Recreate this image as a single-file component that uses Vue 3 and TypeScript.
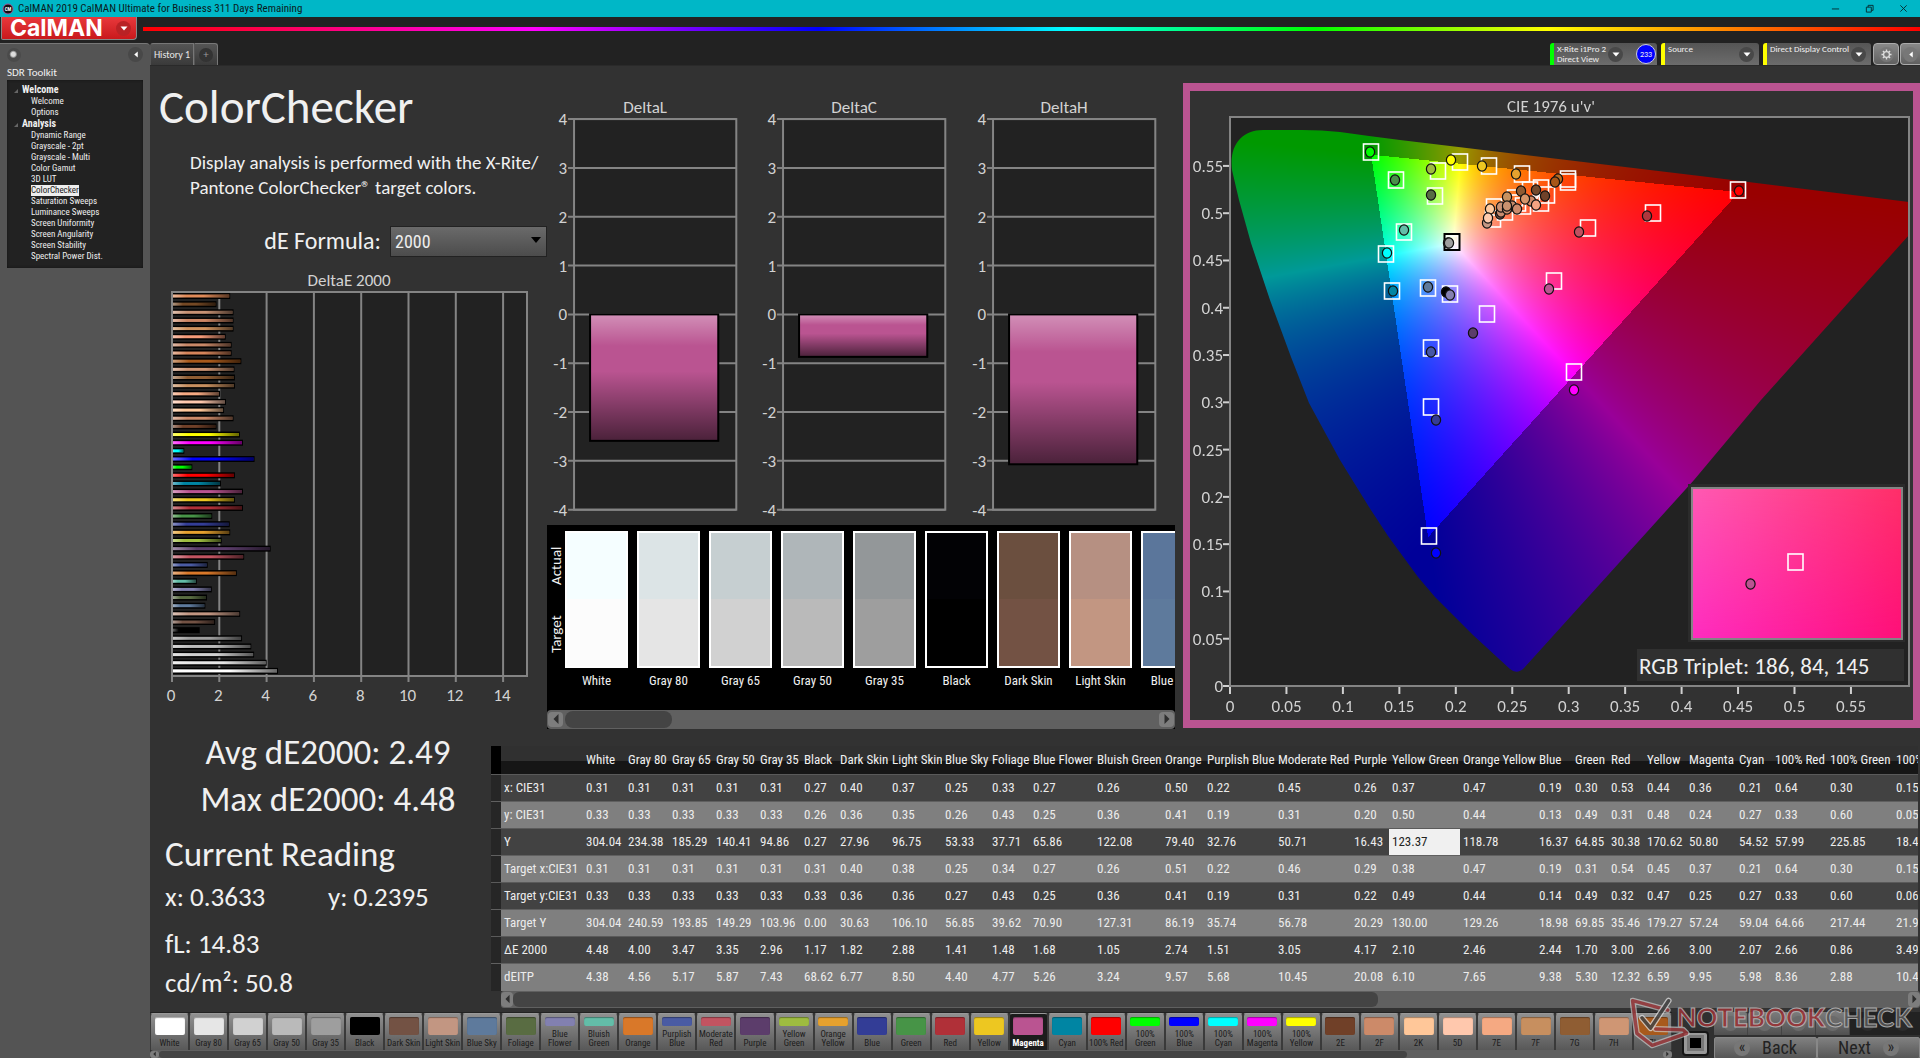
<script setup lang="ts">
import { onMounted, ref } from 'vue'

interface Patch { name: string; color: string; de: number }

const patches: Patch[] = [
  { name: 'White', color: '#ffffff', de: 4.48 },
  { name: 'Gray 80', color: '#e6e6e6', de: 4.0 },
  { name: 'Gray 65', color: '#d1d1d1', de: 3.47 },
  { name: 'Gray 50', color: '#bababa', de: 3.35 },
  { name: 'Gray 35', color: '#9e9e9e', de: 2.96 },
  { name: 'Black', color: '#000000', de: 1.17 },
  { name: 'Dark Skin', color: '#735244', de: 1.82 },
  { name: 'Light Skin', color: '#c29682', de: 2.88 },
  { name: 'Blue Sky', color: '#5e7a9c', de: 1.41 },
  { name: 'Foliage', color: '#596c42', de: 1.48 },
  { name: 'Blue Flower', color: '#8280b0', de: 1.68 },
  { name: 'Bluish Green', color: '#63bda8', de: 1.05 },
  { name: 'Orange', color: '#d97829', de: 2.74 },
  { name: 'Purplish Blue', color: '#4a5ba3', de: 1.51 },
  { name: 'Moderate Red', color: '#c25461', de: 3.05 },
  { name: 'Purple', color: '#5c3d6b', de: 4.17 },
  { name: 'Yellow Green', color: '#9ebc40', de: 2.1 },
  { name: 'Orange Yellow', color: '#e6a12e', de: 2.46 },
  { name: 'Blue', color: '#333d96', de: 2.44 },
  { name: 'Green', color: '#479447', de: 1.7 },
  { name: 'Red', color: '#b03038', de: 3.0 },
  { name: 'Yellow', color: '#edc721', de: 2.66 },
  { name: 'Magenta', color: '#ba5491', de: 3.0 },
  { name: 'Cyan', color: '#0085a3', de: 2.07 },
  { name: '100% Red', color: '#ff0000', de: 2.66 },
  { name: '100% Green', color: '#00ff00', de: 0.86 },
  { name: '100% Blue', color: '#0000ff', de: 3.49 },
  { name: '100% Cyan', color: '#00ffff', de: 0.52 },
  { name: '100% Magenta', color: '#ff00ff', de: 3.0 },
  { name: '100% Yellow', color: '#ffff00', de: 2.87 },
  { name: '2E', color: '#704028', de: 1.88 },
  { name: '2F', color: '#cc8a69', de: 2.6 },
  { name: '2K', color: '#ffc799', de: 2.2 },
  { name: '5D', color: '#ffc8ad', de: 2.28 },
  { name: '7E', color: '#f5a982', de: 2.03 },
  { name: '7F', color: '#c78f5f', de: 2.66 },
  { name: '7G', color: '#8f5d33', de: 2.66 },
  { name: '7H', color: '#cf9674', de: 2.64 },
  { name: '7I', color: '#a85a1c', de: 2.93 },
  { name: '7J', color: '#d4845a', de: 2.52 },
  { name: '8D', color: '#c98868', de: 2.52 },
  { name: '8E', color: '#f59a78', de: 2.27 },
  { name: '8F', color: '#cf935f', de: 2.6 },
  { name: '8G', color: '#cc8664', de: 2.6 },
  { name: '8H', color: '#c79274', de: 2.6 },
  { name: '8I', color: '#744824', de: 1.88 },
  { name: '8J', color: '#e08a58', de: 2.46 },
]

const bars = [...patches].reverse()
const strip = patches.slice(0, 39)
const selected = ref('Magenta')
const formula = ref('2000')
const wrapped = (n: string) => n.length > 10 || (n.startsWith('100%') && n !== '100% Red')

const tree = [
  { title: 'Welcome', items: ['Welcome', 'Options'] },
  {
    title: 'Analysis',
    items: ['Dynamic Range', 'Grayscale - 2pt', 'Grayscale - Multi', 'Color Gamut', '3D LUT', 'ColorChecker',
      'Saturation Sweeps', 'Luminance Sweeps', 'Screen Uniformity', 'Screen Angularity', 'Screen Stability', 'Spectral Power Dist.'],
  },
]

const deltas = [
  { title: 'DeltaL', value: -2.59 },
  { title: 'DeltaC', value: -0.87 },
  { title: 'DeltaH', value: -3.07 },
]
const levels = [4, 3, 2, 1, 0, -1, -2, -3, -4]
const levelY = (v: number) => 248 - v * 48.75

const comparison = [
  { name: 'White', actual: '#f5feff', target: '#fcfcfc' },
  { name: 'Gray 80', actual: '#dce4e6', target: '#e5e5e5' },
  { name: 'Gray 65', actual: '#c6cfd1', target: '#d1d1d1' },
  { name: 'Gray 50', actual: '#afb6b9', target: '#bababa' },
  { name: 'Gray 35', actual: '#939799', target: '#9e9e9e' },
  { name: 'Black', actual: '#020205', target: '#000000' },
  { name: 'Dark Skin', actual: '#6b4f3f', target: '#735244' },
  { name: 'Light Skin', actual: '#b69082', target: '#c29682' },
  { name: 'Blue Sky', actual: '#5b769b', target: '#5e7a9c' },
]

const columns: [string, number][] = [
  ['White', 42], ['Gray 80', 44], ['Gray 65', 44], ['Gray 50', 44], ['Gray 35', 44], ['Black', 36], ['Dark Skin', 52],
  ['Light Skin', 53], ['Blue Sky', 47], ['Foliage', 41], ['Blue Flower', 64], ['Bluish Green', 68], ['Orange', 42],
  ['Purplish Blue', 71], ['Moderate Red', 76], ['Purple', 38], ['Yellow Green', 71], ['Orange Yellow', 76], ['Blue', 36],
  ['Green', 36], ['Red', 36], ['Yellow', 42], ['Magenta', 50], ['Cyan', 36], ['100% Red', 55], ['100% Green', 66], ['100% Blue', 66],
]
const rows = [
  { label: 'x: CIE31', values: '0.31 0.31 0.31 0.31 0.31 0.27 0.40 0.37 0.25 0.33 0.27 0.26 0.50 0.22 0.45 0.26 0.37 0.47 0.19 0.30 0.53 0.44 0.36 0.21 0.64 0.30 0.15' },
  { label: 'y: CIE31', values: '0.33 0.33 0.33 0.33 0.33 0.26 0.36 0.35 0.26 0.43 0.25 0.36 0.41 0.19 0.31 0.20 0.50 0.44 0.13 0.49 0.31 0.48 0.24 0.27 0.33 0.60 0.05' },
  { label: 'Y', values: '304.04 234.38 185.29 140.41 94.86 0.27 27.96 96.75 53.33 37.71 65.86 122.08 79.40 32.76 50.71 16.43 123.37 118.78 16.37 64.85 30.38 170.62 50.80 54.52 57.99 225.85 18.41' },
  { label: 'Target x:CIE31', values: '0.31 0.31 0.31 0.31 0.31 0.31 0.40 0.38 0.25 0.34 0.27 0.26 0.51 0.22 0.46 0.29 0.38 0.47 0.19 0.31 0.54 0.45 0.37 0.21 0.64 0.30 0.15' },
  { label: 'Target y:CIE31', values: '0.33 0.33 0.33 0.33 0.33 0.33 0.36 0.36 0.27 0.43 0.25 0.36 0.41 0.19 0.31 0.22 0.49 0.44 0.14 0.49 0.32 0.47 0.25 0.27 0.33 0.60 0.06' },
  { label: 'Target Y', values: '304.04 240.59 193.85 149.29 103.96 0.00 30.63 106.10 56.85 39.62 70.90 127.31 86.19 35.74 56.78 20.29 130.00 129.26 18.98 69.85 35.46 179.27 57.24 59.04 64.66 217.44 21.96' },
  { label: 'ΔE 2000', values: '4.48 4.00 3.47 3.35 2.96 1.17 1.82 2.88 1.41 1.48 1.68 1.05 2.74 1.51 3.05 4.17 2.10 2.46 2.44 1.70 3.00 2.66 3.00 2.07 2.66 0.86 3.49' },
  { label: 'dEITP', values: '4.38 4.56 5.17 5.87 7.43 68.62 6.77 8.50 4.40 4.77 5.26 3.24 9.57 5.68 10.45 20.08 6.10 7.65 9.38 5.30 12.32 6.59 9.95 5.98 8.36 2.88 10.45' },
].map(r => ({ label: r.label, cells: r.values.split(' ') }))

// Chromaticity diagram, in the units of its plot area (679 x 569).
const uTicks = ['0', '0.05', '0.1', '0.15', '0.2', '0.25', '0.3', '0.35', '0.4', '0.45', '0.5', '0.55']
const U = 1129
const V = 945.5
const locus = 'M2 53 L9 83 L21 126 L40 183 L61 240 L79 286 L110 343 L139 390 L158 419 L188 460 L205 480 L243 518 L280 552 Q287 558 294 551 L464 363 L531 283 L679 118 L700 95 L700 88 L679 85 L470 59 L170 23 L139 19 L110 15 Q92 13 72 13 L33 13 C12 13 -1 28 2 53 Z'

const targets: [number, number][] = [
  [141, 35], [166, 63], [208, 54], [230, 45], [259, 49], [292, 57], [338, 62], [338, 65], [205, 79], [174, 115],
  [156, 137], [162, 174], [198, 171], [220, 177], [257, 197], [201, 231], [201, 290], [199, 419], [344, 255], [324, 164],
  [358, 111], [423, 96], [508, 73], [264, 90], [263, 102], [275, 95], [285, 81], [300, 73], [311, 71], [317, 78],
  [311, 86], [293, 89], [288, 86],
]
const readings: [number, number, string][] = [
  [140, 35, '#00ff00'], [165, 63, '#489149'], [201, 52, '#9ebc40'], [221, 43, '#ffff00'], [252, 49, '#edc721'],
  [286, 57, '#e6a12e'], [328, 62, '#b86a20'], [325, 65, '#a85617'], [201, 78, '#576c44'], [174, 113, '#63bda8'],
  [157, 136, '#00ffff'], [163, 174, '#0085a3'], [218, 126, '#888888'], [219, 126, '#9e9e9e'], [198, 170, '#5e7a9c'],
  [216, 175, '#000000'], [220, 178, '#8580b1'], [243, 216, '#5c3d6b'], [201, 235, '#4657a5'], [206, 303, '#353c94'],
  [206, 436, '#0000ff'], [344, 273, '#ff00ff'], [319, 172, '#ba5491'], [349, 115, '#c15060'], [417, 99, '#af363c'],
  [509, 74, '#ff0000'], [306, 73, '#744a2c'], [291, 74, '#8f5b33'], [315, 79, '#70422a'], [301, 84, '#cf8a68'],
  [295, 82, '#d5956a'], [306, 88, '#f5a382'], [282, 89, '#c68a6a'], [270, 97, '#735045'], [271, 95, '#c78c70'],
  [271, 90, '#c99377'], [277, 92, '#cc8f6f'], [277, 80, '#c8925f'], [277, 89, '#c9916f'], [287, 92, '#cc8a6c'],
  [260, 92, '#ffca9f'], [257, 106, '#c59885'], [258, 101, '#ffcbae'],
]

const gamut = ref<HTMLCanvasElement | null>(null)

onMounted(() => {
  const canvas = gamut.value
  const ctx = canvas?.getContext('2d')
  if (!canvas || !ctx) return
  const { width, height } = canvas
  const image = ctx.createImageData(width, height)
  for (let py = 0; py < height; py++) {
    for (let px = 0; px < width; px++) {
      const u = (px + 0.5) / U
      const v = Math.max((569 - py) / V, 0.001)
      const d = 6 * u - 16 * v + 12
      const x = (9 * u) / d
      const y = (4 * v) / d
      const X = x / y
      const Z = (1 - x - y) / y
      const r = 3.2406 * X - 1.5372 - 0.4986 * Z
      const g = -0.9689 * X + 1.8758 + 0.0415 * Z
      const b = 0.0557 * X - 0.204 + 1.057 * Z
      // Colours outside the display's triangle are shown dimmed.
      const level = (Math.min(r, g, b) < 0 ? 153 : 255) / Math.max(r, g, b)
      const i = (py * width + px) * 4
      image.data[i] = Math.max(r, 0) * level
      image.data[i + 1] = Math.max(g, 0) * level
      image.data[i + 2] = Math.max(b, 0) * level
      image.data[i + 3] = 255
    }
  }
  ctx.putImageData(image, 0, 0)
  ctx.globalCompositeOperation = 'destination-in'
  ctx.fill(new Path2D(locus))
})
</script>

<template>
  <div class="app">
    <div class="titlebar">
      <svg class="app-icon" viewBox="0 0 12 12"><circle cx="6" cy="6" r="5" fill="#111" stroke="#a3589a" stroke-width="1" /><text x="6" y="8" text-anchor="middle" font-size="5" font-weight="700" fill="#fff">CM</text></svg>
      <span class="title">CalMAN 2019 CalMAN Ultimate for Business 311 Days Remaining</span>
      <button class="win" aria-label="Minimize"><svg viewBox="0 0 10 10"><path d="M1 5.5H9" /></svg></button>
      <button class="win" aria-label="Restore"><svg viewBox="0 0 10 10"><path d="M1.5 3.5H7V9H1.5ZM3.500 3.500V1.500H9V7H7" /></svg></button>
      <button class="win" aria-label="Close"><svg viewBox="0 0 10 10"><path d="M1.500 1.500L8.500 8.500M8.500 1.500L1.500 8.500" /></svg></button>
    </div>

    <header class="brandbar">
      <button class="brand">CalMAN<span class="knob red"><svg viewBox="0 0 8 6"><path d="M0.500 1H7.500L4 5Z" /></svg></span></button>
      <div class="rainbow"></div>
    </header>

    <div class="body">
      <aside class="sidebar">
        <div class="side-top">
          <span class="dot"></span>
          <button class="knob" aria-label="Collapse"><svg viewBox="0 0 6 8"><path d="M5 0.500V7.500L1 4Z" /></svg></button>
        </div>
        <h2 class="side-title">SDR Toolkit</h2>
        <nav class="tree">
          <div v-for="group in tree" :key="group.title">
            <h3>{{ group.title }}</h3>
            <ul>
              <li v-for="item in group.items" :key="item"><a href="#" :class="{ current: item === 'ColorChecker' }">{{ item }}</a></li>
            </ul>
          </div>
        </nav>
      </aside>

      <main class="main">
        <div class="tabs">
          <button class="tab">History 1</button>
          <button class="tab add" aria-label="Add history"><span class="plus">+</span></button>
          <div class="devices">
            <div class="device meter">
              <span class="device-name">X-Rite i1Pro 2<br>Direct View</span>
              <button class="knob" aria-label="Meter menu"><svg viewBox="0 0 8 6"><path d="M0.500 1H7.500L4 5Z" /></svg></button>
              <span class="badge">233</span>
            </div>
            <div class="device source">
              <span class="device-name">Source</span>
              <button class="knob" aria-label="Source menu"><svg viewBox="0 0 8 6"><path d="M0.500 1H7.500L4 5Z" /></svg></button>
            </div>
            <div class="device display">
              <span class="device-name">Direct Display Control</span>
              <button class="knob" aria-label="Display menu"><svg viewBox="0 0 8 6"><path d="M0.500 1H7.500L4 5Z" /></svg></button>
            </div>
            <button class="square" aria-label="Settings"><span class="knob light"><svg class="gear" viewBox="0 0 12 12"><circle cx="6" cy="6" r="3.200" fill="none" stroke="#ddd" stroke-width="1.400" /><path d="M6 .5V2.500M6 9.500V11.500M.5 6H2.500M9.500 6H11.500M2.100 2.100L3.500 3.500M8.500 8.500L9.900 9.900M2.100 9.900L3.500 8.500M8.500 3.500L9.900 2.100" stroke="#ddd" stroke-width="1.500" /></svg></span></button>
            <button class="square narrow" aria-label="Expand"><span class="knob light"><svg viewBox="0 0 6 8"><path d="M5 0.500V7.500L1 4Z" /></svg></span></button>
          </div>
        </div>

        <div class="content">
          <section class="upper">
            <div class="intro">
              <h1>ColorChecker</h1>
              <p>Display analysis is performed with the X-Rite/<br>Pantone ColorChecker® target colors.</p>
              <div class="formula">
                <label for="formula">dE Formula:</label>
                <div class="select">
                  <select id="formula" v-model="formula"><option>2000</option><option>1994</option><option>1976</option></select>
                  <svg viewBox="0 0 10 6"><path d="M0 0H10L5 6Z" /></svg>
                </div>
              </div>
              <svg class="chart" viewBox="0 0 397 460">
                <defs>
                  <linearGradient id="along"><stop offset="0" stop-color="#fff" stop-opacity=".45" /><stop offset=".25" stop-color="#fff" stop-opacity="0" /><stop offset=".55" stop-color="#000" stop-opacity="0" /><stop offset="1" stop-color="#000" stop-opacity=".6" /></linearGradient>
                </defs>
                <text x="199" y="31" class="lab mid">DeltaE 2000</text>
                <rect x="22" y="37" width="355" height="384" fill="#222" />
                <g v-for="i in 8" :key="i">
                  <line :x1="22 + (i - 1) * 47.3" :x2="22 + (i - 1) * 47.3" y1="37" y2="427" class="grid" />
                  <text :x="21 + (i - 1) * 47.3" y="446" class="lab mid">{{ (i - 1) * 2 }}</text>
                </g>
                <g v-for="(b, i) in bars" :key="b.name">
                  <rect x="22" :y="38 + i * 8.15" :width="b.de * 23.66" height="6" fill="#000" />
                  <rect x="22" :y="39.5 + i * 8.15" :width="b.de * 23.66 - 1" height="3" :fill="b.color" />
                  <rect x="22" :y="39.5 + i * 8.15" :width="b.de * 23.66 - 1" height="3" fill="url(#along)" />
                </g>
                <rect x="22" y="37" width="355" height="384" class="frame" />
              </svg>
            </div>

            <div class="middle">
              <div class="deltas">
                <svg v-for="d in deltas" :key="d.title" class="chart" viewBox="0 0 209 458">
                  <defs>
                    <linearGradient id="down" x2="0" y2="1"><stop offset="0" stop-color="#fff" stop-opacity=".35" /><stop offset=".25" stop-color="#fff" stop-opacity="0" /><stop offset=".45" stop-color="#000" stop-opacity="0" /><stop offset="1" stop-color="#000" stop-opacity=".6" /></linearGradient>
                  </defs>
                  <text x="98" y="47" class="lab mid">{{ d.title }}</text>
                  <rect x="27" y="53" width="162" height="390" fill="#222" />
                  <g v-for="l in levels" :key="l">
                    <line x1="21" x2="189" :y1="levelY(l)" :y2="levelY(l)" class="grid" />
                    <text x="20" :y="levelY(l) + 6" class="lab end">{{ l }}</text>
                  </g>
                  <rect x="27" y="53" width="162" height="390" class="frame" />
                  <rect x="43" y="248" width="128" :height="-d.value * 48.75" fill="#ba5491" />
                  <rect x="43" y="248" width="128" :height="-d.value * 48.75" fill="url(#down)" stroke="#000" stroke-width="2" />
                </svg>
              </div>

              <div class="compare">
                <div class="compare-view">
                  <div class="sides"><span>Actual</span><span>Target</span></div>
                  <figure v-for="c in comparison" :key="c.name">
                    <div class="pair"><div :style="{ background: c.actual }"></div><div :style="{ background: c.target }"></div></div>
                    <figcaption>{{ c.name }}</figcaption>
                  </figure>
                </div>
                <div class="scroll big">
                  <button aria-label="Scroll left"><svg viewBox="0 0 6 12"><path d="M5.500 1V11L0.500 6Z" /></svg></button>
                  <div class="track"><div class="thumb" style="width: 18%"></div></div>
                  <button aria-label="Scroll right"><svg viewBox="0 0 6 12"><path d="M0.500 1V11L5.500 6Z" /></svg></button>
                </div>
              </div>
            </div>

            <div class="cie">
              <canvas ref="gamut" width="679" height="569"></canvas>
              <svg class="chart overlay" viewBox="0 0 723 629">
                <defs>
                  <linearGradient id="insetTop"><stop offset="0" stop-color="#ff5ab4" /><stop offset="1" stop-color="#ff2f68" /></linearGradient>
                  <linearGradient id="insetBottom"><stop offset="0" stop-color="#ff2cc0" /><stop offset="1" stop-color="#ff0f78" /></linearGradient>
                  <linearGradient id="fade" x2="0" y2="1"><stop offset="0" stop-color="#000" /><stop offset="1" stop-color="#fff" /></linearGradient>
                  <mask id="lower"><rect x="502" y="397" width="210" height="151" fill="url(#fade)" /></mask>
                </defs>
                <text x="361" y="21" class="lab mid">CIE 1976 u'v'</text>
                <g v-for="(t, i) in uTicks" :key="t">
                  <line :x1="40 + i * 56.45" :x2="40 + i * 56.45" y1="595" y2="603" class="tick" />
                  <text :x="40 + i * 56.45" y="621" class="lab mid">{{ t }}</text>
                  <line x1="33" x2="40" :y1="595 - i * 47.28" :y2="595 - i * 47.28" class="tick" />
                  <text x="33" :y="601 - i * 47.28" class="lab end">{{ t }}</text>
                </g>
                <rect x="40" y="26" width="679" height="569" class="frame" />
                <g transform="translate(40 26)">
                  <rect v-for="(p, i) in targets" :key="i" :x="p[0] - 7.5" :y="p[1] - 8" width="15" height="16" fill="none" stroke="#fff" stroke-width="1.600" />
                  <rect x="216" y="119" width="12" height="13" fill="none" stroke="#fff" stroke-width="1.500" />
                  <rect x="214.500" y="117" width="15" height="16" fill="none" stroke="#000" stroke-width="2" />
                  <ellipse v-for="(p, i) in readings" :key="i" :cx="p[0]" :cy="p[1]" rx="4.600" ry="5.200" :fill="p[2]" stroke="#111" stroke-width="1.200" />
                </g>
                <rect x="498" y="393" width="217" height="158" fill="#2b2b2b" />
                <rect x="502" y="397" width="210" height="151" fill="url(#insetTop)" />
                <rect x="502" y="397" width="210" height="151" fill="url(#insetBottom)" mask="url(#lower)" />
                <rect x="502" y="397" width="210" height="151" class="frame" />
                <rect x="598" y="463" width="15" height="16" fill="none" stroke="#fff" stroke-width="1.600" />
                <ellipse cx="560.500" cy="493" rx="4.600" ry="5.200" fill="#ba5491" stroke="#111" stroke-width="1.200" />
                <rect x="447" y="558" width="267" height="32" fill="#303030" />
                <text x="449" y="583" class="triplet">RGB Triplet: 186, 84, 145</text>
              </svg>
            </div>
          </section>

          <section class="lower">
            <div class="stats">
              <div class="big-stat">Avg dE2000: 2.49</div>
              <div class="big-stat">Max dE2000: 4.48</div>
              <h2>Current Reading</h2>
              <div class="reading"><span>x: 0.3633</span><span>y: 0.2395</span></div>
              <div class="reading">fL: 14.83</div>
              <div class="reading tight">cd/m²: 50.8</div>
            </div>
            <div class="data">
              <div class="data-view">
                <table>
                  <colgroup>
                    <col class="gutter-col"><col class="label-col">
                    <col v-for="c in columns" :key="c[0]" :style="{ width: c[1] + 'px' }">
                  </colgroup>
                  <thead>
                    <tr><td></td><td></td><th v-for="c in columns" :key="c[0]" scope="col">{{ c[0] }}</th></tr>
                  </thead>
                  <tbody>
                    <tr v-for="(r, ri) in rows" :key="r.label">
                      <td class="gutter"></td>
                      <th scope="row">{{ r.label }}</th>
                      <td v-for="(c, ci) in r.cells" :key="ci" :class="{ picked: ri === 2 && ci === 16 }">{{ c }}</td>
                    </tr>
                  </tbody>
                </table>
              </div>
              <div class="scroll medium">
                <button aria-label="Scroll left"><svg viewBox="0 0 6 12"><path d="M5.500 1V11L0.500 6Z" /></svg></button>
                <div class="track"><div class="thumb" style="width: 62%"></div></div>
                <button aria-label="Scroll right"><svg viewBox="0 0 6 12"><path d="M0.500 1V11L5.500 6Z" /></svg></button>
              </div>
            </div>
          </section>
        </div>

        <footer class="bottom">
          <div class="patches">
            <div class="patch-row">
              <button v-for="p in strip" :key="p.name" :class="['patch', { on: p.name === selected, two: wrapped(p.name) }]" @click="selected = p.name">
                <span class="chip" :style="{ background: p.color }"></span>
                <span class="patch-name">{{ p.name }}</span>
              </button>
            </div>
            <div class="scroll small">
              <button aria-label="Scroll left"><svg viewBox="0 0 6 12"><path d="M5.500 1V11L0.500 6Z" /></svg></button>
              <div class="track"><div class="thumb" style="width: 83%"></div></div>
              <button aria-label="Scroll right"><svg viewBox="0 0 6 12"><path d="M0.500 1V11L5.500 6Z" /></svg></button>
            </div>
          </div>
          <button class="stop" aria-label="Stop"><span></span></button>
          <div class="controls">
            <div class="tools">
              <button v-for="n in 4" :key="n" :aria-label="'Tool ' + n"><i></i></button>
              <div class="idle"><i></i><i></i></div>
            </div>
            <div class="steps">
              <button><i>«</i>Back</button>
              <button>Next<i>»</i></button>
            </div>
          </div>
          <div class="watermark">
            <svg viewBox="0 0 70 60">
              <g fill="none" stroke-linejoin="round" stroke-linecap="round">
                <path d="M3 4L44 15M3 4L8 42L26 56L66 42L62 38L30 37" stroke="#ccc" stroke-width="7" opacity=".8" />
                <path d="M3 4L44 15M3 4L8 42L26 56L66 42L62 38L30 37" stroke="#9c3b3e" stroke-width="4" />
                <path d="M14 24L24 36L45 4" stroke="#ddd" stroke-width="7" opacity=".9" />
                <path d="M14 24L24 36L45 4" stroke="#444" stroke-width="4" />
              </g>
            </svg>
            <div class="mark-text"><b>NOTEBOOK</b><span>CHECK</span></div>
          </div>
        </footer>
      </main>
    </div>
  </div>
</template>

<style>
body { background: #323232; }
</style>

<style scoped>
* { box-sizing: border-box; }
.app { --main: Carlito, Calibri, Lato, sans-serif; --narrow: "Roboto Condensed", Roboto, sans-serif; display: flex; flex-direction: column; min-height: 100vh; background: #323232; color: #f0f0f0; font-family: var(--main); overflow: hidden; }
button { padding: 0; border: 0; background: none; color: inherit; font: inherit; }
h1, h2, h3, p, ul, figure { margin: 0; padding: 0; font-weight: 400; }
ul { list-style: none; }
svg { display: block; }

.titlebar { display: flex; align-items: center; height: 17px; padding-left: 2px; background: #00b7c7; color: #0a1a1c; font: 11px/17px var(--narrow); }
.app-icon { width: 12px; height: 12px; margin-right: 4px; }
.title { flex: 1; }
.win { display: flex; justify-content: center; width: 34px; }
.win svg { width: 9px; height: 9px; fill: none; stroke: #06282c; stroke-width: 1; }

.brandbar { display: flex; height: 26px; padding-left: 1px; background: #222; }
.brand { display: flex; align-items: center; justify-content: space-between; width: 136px; height: 23px; padding: 0 5px 0 8px; border: 1px solid #888; border-top: 0; border-radius: 0 0 4px 2px; background: linear-gradient(#e8393c, #c9191c); color: #fff; font: 700 23px/22px Inter, sans-serif; }
.rainbow { flex: 1; height: 4px; margin: 10px 0 0 6px; background: linear-gradient(90deg, #f00, #f0f 22%, #00f 38%, #0ff 52%, #0f0 66%, #ff0 79%, #f00); }
.knob { display: flex; align-items: center; justify-content: center; width: 15px; height: 15px; border-radius: 50%; background: #484848; }
.knob svg { width: 8px; height: 7px; fill: #fff; }
.knob.red { background: #b92225; }
.knob.light { background: #777; }

.body { display: flex; flex: 1; background: #222; }
.sidebar { width: 150px; border-top: 1px solid #777; border-radius: 0 4px 0 0; background: #545454; }
.side-top { display: flex; justify-content: space-between; align-items: center; height: 21px; padding: 0 7px; }
.dot { width: 14px; height: 14px; border-radius: 50%; background: radial-gradient(circle at 45% 45%, #ddd 0 2px, #999 3px, #4a4a4a 4px); }
.side-title { padding-left: 7px; font-size: 11px; line-height: 15px; }
.tree { margin: 0 7px; padding: 4px 0; height: 188px; background: #222; font: 9px/11px var(--narrow); box-shadow: inset 0 0 3px #111; }
.tree h3 { position: relative; padding-left: 15px; font: 700 10px/12px var(--narrow); }
.tree h3::before { content: ""; position: absolute; left: 7px; top: 5px; border: 2px solid transparent; border-right-color: #666; border-bottom-color: #666; }
.tree li { padding-left: 24px; height: 11px; }
.tree a { color: #eee; text-decoration: none; display: inline-block; height: 11px; }
.tree a.current { background: #eee; color: #222; }

.main { flex: 1; min-width: 0; display: flex; flex-direction: column; background: #323232; }
.tabs { display: flex; align-items: flex-end; height: 23px; background: #222; border-bottom: 1px solid #2a2a2a; }
.tab { height: 22px; width: 44px; border: 1px solid #777; border-bottom: 0; border-left-color: #555; border-radius: 3px 0 0 0; background: linear-gradient(#555, #3a3a3a); color: #e8e8e8; font-size: 10px; }
.tab.add { width: 24px; border-radius: 0 3px 0 0; display: flex; align-items: center; justify-content: center; }
.plus { width: 14px; height: 14px; border-radius: 50%; background: #333; color: #999; font-size: 11px; line-height: 14px; }
.devices { display: flex; gap: 4px; margin-left: auto; }
.device { display: flex; align-items: center; height: 22px; padding: 0 5px 0 3px; border-left: 4px solid #ff0; border-radius: 3px 3px 0 0; background: linear-gradient(#555, #6c6c6c); }
.device-name { flex: 1; align-self: flex-start; padding-top: 1px; font-size: 9px; line-height: 10px; white-space: nowrap; }
.meter { width: 107px; border-left-color: #0f0; padding-right: 1px; }
.source { width: 98px; }
.display { width: 108px; }
.badge { width: 20px; height: 20px; margin-left: 13px; border: 1px solid #ccd; border-radius: 50%; background: #00f; font-size: 8px; line-height: 18px; text-align: center; }
.square { display: flex; align-items: center; justify-content: center; width: 26px; height: 22px; margin-left: -2px; border: 1px solid #aaa; border-radius: 4px; background: linear-gradient(#888, #606060); }
.square.narrow { width: 20px; margin-left: -3px; border-right: 0; border-radius: 4px 0 0 4px; }
.square .gear { width: 11px; height: 11px; }

.content { flex: 1; }
.upper { display: grid; grid-template-columns: minmax(0, 397fr) minmax(0, 628fr) minmax(0, 745fr); }
.chart { width: 100%; height: auto; overflow: hidden; }
.lab { font: 17px var(--main); fill: #d2d2d2; }
.mid { text-anchor: middle; }
.end { text-anchor: end; }
.grid { stroke: #848484; stroke-width: 2; }
.tick { stroke: #d0d0d0; stroke-width: 2; }
.frame { fill: none; stroke: #848484; stroke-width: 2; }
.intro { padding-top: 13px; }
.intro h1 { padding-left: 9px; font-size: 47px; line-height: 56px; }
.intro p { margin-top: 15px; padding-left: 40px; font-size: 19px; line-height: 25px; white-space: nowrap; }
.formula { display: flex; justify-content: flex-end; align-items: center; gap: 9px; margin-top: 26px; height: 29px; font-size: 24px; }
.select { position: relative; width: 157px; height: 31px; }
.select select { width: 100%; height: 100%; padding: 0 4px; appearance: none; border: 1px solid #222; border-radius: 0; background: linear-gradient(#6a6a6a, #4c4c4c); color: #eee; font: 18px var(--narrow); }
.select svg { position: absolute; right: 6px; top: 12px; width: 10px; height: 6px; fill: #000; pointer-events: none; }

.deltas { display: grid; grid-template-columns: 1fr 1fr 1fr; }
.compare { background: #000; }
.compare-view { display: flex; gap: 9px; height: 185px; padding-top: 6px; overflow: hidden; }
.sides { flex: none; display: flex; flex-direction: row-reverse; justify-content: space-around; width: 18px; height: 137px; margin-right: -9px; writing-mode: vertical-rl; transform: rotate(180deg); font-size: 15px; line-height: 18px; }
.compare figure { flex: none; width: 63px; }
.pair { height: 137px; border: 2px solid #fff; }
.pair div { height: 50%; }
.compare figcaption { margin: 5px -5px 0; text-align: center; font: 13px/16px var(--narrow); color: #f0f0f0; }

.scroll { display: flex; background: #606060; border-radius: 4px; }
.scroll button { display: flex; align-items: center; justify-content: center; border-radius: 4px; background: #7d7d7d; }
.scroll svg { fill: #2e2e2e; }
.track { flex: 1; }
.thumb { height: 100%; border-radius: 8px; background: #444; }
.big { height: 19px; padding: 1px; }
.big button { width: 15px; margin: 1px 0; }
.big .track { margin: 0 2px; }
.big svg { width: 6px; height: 12px; }
.medium { height: 17px; padding: 1px 0; margin-left: 10px; border-radius: 3px; }
.medium button { width: 12px; }
.medium .thumb { border-radius: 6px; }
.medium svg { width: 5px; height: 10px; }
.small { height: 9px; padding: 1px 0; }
.small button { width: 9px; }
.small .thumb { border-radius: 4px; }
.small svg { width: 3px; height: 6px; }

.cie { position: relative; margin: 17px 0 0 8px; border: 8px solid #ba5491; border-width: 8px 7px; background: #323232; align-self: start; }
.cie canvas { position: absolute; left: calc(100% * 40 / 723); top: calc(100% * 26 / 629); width: calc(100% * 679 / 723); height: calc(100% * 569 / 629); background: #222; }
.overlay { position: relative; }
.triplet { font: 23px var(--main); fill: #f0f0f0; }

.lower { display: flex; }
.stats { width: 341px; flex: none; padding-left: 15px; }
.big-stat { text-align: center; font-size: 35px; line-height: 47px; }
.stats h2 { margin-top: 8px; font-size: 35px; line-height: 46px; }
.reading { display: flex; margin-bottom: 8px; font-size: 27px; line-height: 39px; }
.reading span { width: 166px; }
.reading.tight { margin: -8px 0 0; }
.data { flex: 1; min-width: 0; margin-top: 17px; }
.data-view { overflow: hidden; margin-right: 2px; }
table { table-layout: fixed; width: 0; border-collapse: collapse; font: 13px/26px var(--narrow); }
.gutter-col { width: 10px; }
.label-col { width: 82px; }
th, td { padding: 0 0 0 3px; text-align: left; font-weight: 400; white-space: nowrap; overflow: hidden; }
thead tr { height: 29px; background: linear-gradient(#303030 0 50%, #161616 50% 100%); }
thead td:first-child { background: #000; }
tbody tr { height: 27px; background: #424242; border-top: 1px solid #5a5a5a; }
tbody tr:nth-child(even) { background: #7f7f7f; border-top-color: #606060; }
tbody .gutter { background: #262626; }
tbody td, tbody th { color: #ececec; }
tbody .picked { background: #f0f0f0; color: #222; }

.bottom { position: relative; display: flex; height: 48px; margin-top: 4px; background: #303030; }
.patches { flex: 1; min-width: 0; }
.patch-row { display: flex; height: 38px; border-top: 1px solid #222; }
.patch { flex: 1; display: flex; flex-direction: column; align-items: center; min-width: 0; padding-top: 3px; border: 1px solid #3a3a3a; border-width: 1px 1px 0 1px; border-top-color: #999; border-radius: 3px 3px 0 0; background: linear-gradient(#909090, #585858); color: #1c1c1c; font: 9px/9px var(--narrow); }
.chip { flex: none; width: 30px; height: 18px; border-radius: 2px; box-shadow: inset 0 1px 1px rgba(0, 0, 0, .35); }
.patch-name { margin: 4px -3px 0; white-space: nowrap; }
.two .chip { height: 9px; }
.two .patch-name { width: 34px; white-space: normal; }
.patch.on { background: #1c1c1c; color: #fff; font-weight: 700; }
.stop { align-self: flex-end; width: 27px; height: 25px; margin: 0 5px 4px 10px; border: 2px solid #151515; border-radius: 4px; background: #999; }
.stop span { display: block; width: 17px; height: 16px; margin: 2px auto; border: 3px solid #777; background: #000; }
.controls { width: 206px; flex: none; }
.tools { display: flex; height: 23px; margin-bottom: 2px; }
.tools button { width: 34px; background: linear-gradient(#7c7c7c, #505050); border-right: 1px solid #444; border-radius: 3px 3px 0 0; }
.tools i { display: block; width: 15px; height: 15px; margin: 0 auto; border-radius: 50%; background: #6a6a6a; }
.idle { flex: 1; display: flex; align-items: center; background: #222; }
.idle i { background: #2c2c2c; }
.steps { display: flex; height: 22px; }
.steps button { flex: 1; display: flex; align-items: center; justify-content: center; gap: 12px; border: 1px solid #888; border-radius: 2px; background: linear-gradient(#808080, #565656); color: #222; font: 18px/20px var(--narrow); }
.steps i { width: 16px; height: 16px; border-radius: 50%; background: #777; font: 16px/14px var(--narrow); }
.watermark { position: absolute; right: 8px; top: -17px; display: flex; align-items: flex-start; opacity: .85; pointer-events: none; }
.watermark svg { width: 60px; height: 56px; margin-right: -14px; }
.mark-text { padding-top: 7px; font: 700 26px/30px Lato, sans-serif; color: #555; -webkit-text-stroke: 1px #bbb; }
.mark-text b { color: #9c3236; }
</style>
